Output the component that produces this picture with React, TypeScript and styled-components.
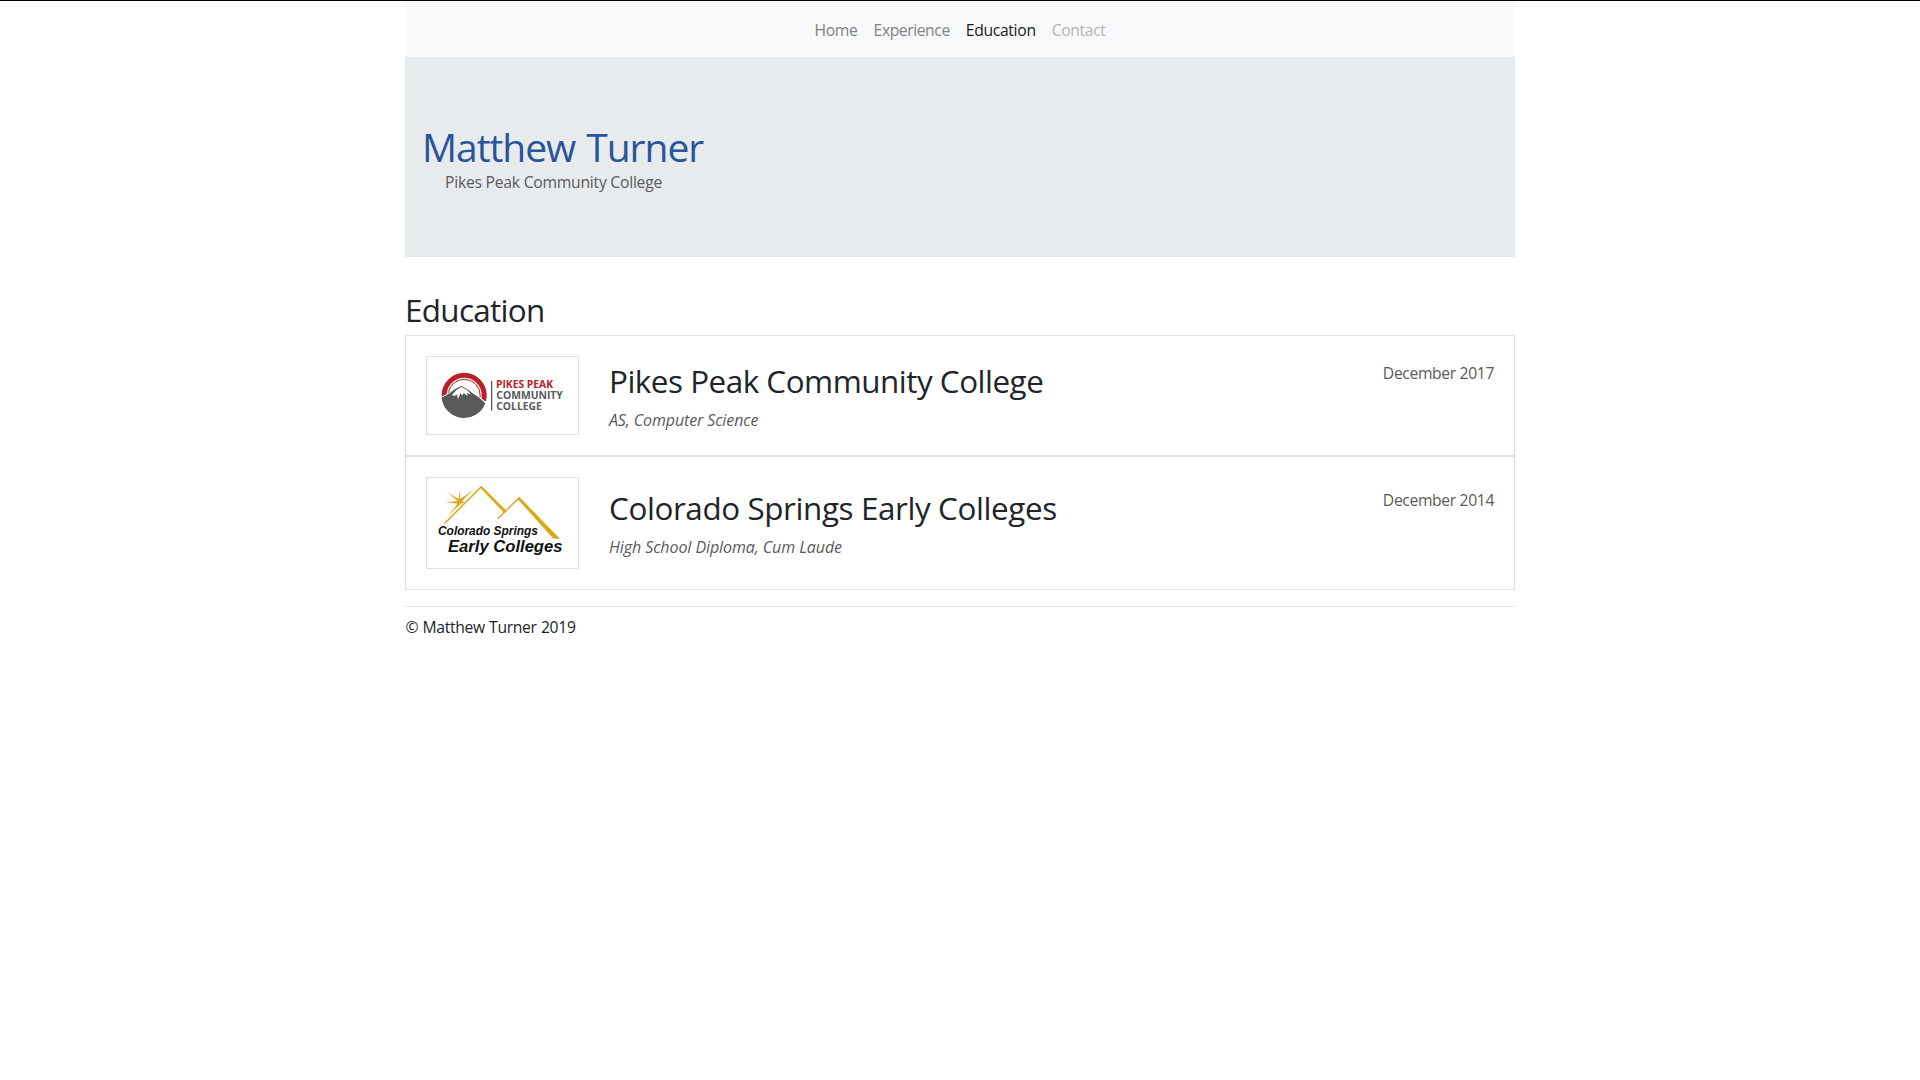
import React from 'react';
import styled, { createGlobalStyle } from 'styled-components';

const GlobalStyle = createGlobalStyle`
  *, *::before, *::after { box-sizing: border-box; }
  body {
    margin: 0;
    border-top: 1px solid #000;
    background: #fff;
    color: #212529;
    font: 400 15.7px/24px "Open Sans", "Noto Sans", sans-serif;
  }
  h1, h2, h3, p { margin: 0; font-weight: 400; }
`;

const Container = styled.div`
  width: 1110px;
  margin: 0 auto;
`;

const Navbar = styled.nav`
  display: flex;
  justify-content: center;
  gap: 16px;
  height: 56px;
  padding: 17px 0 0;
  background: #f8f9fb;
`;

const NavLink = styled.a<{ $color?: string; $spacing: number }>`
  color: ${(p) => p.$color ?? '#808182'};
  letter-spacing: ${(p) => p.$spacing}px;
  text-decoration: none;
`;

const Jumbotron = styled.header`
  height: 200px;
  padding: 66px 17px 0;
  background: #e8ebee;
`;

const Name = styled.h1`
  color: #2a5599;
  font-size: 39px;
  line-height: 48px;
  letter-spacing: -1.05px;
  word-spacing: 2px;
`;

const School = styled.p`
  margin: -1px 0 0 23px;
  color: #5a5a5a;
  letter-spacing: -0.24px;
`;

const SectionTitle = styled.h2`
  margin: 34px 0 6px;
  font-size: 31.4px;
  line-height: 38px;
  letter-spacing: -0.66px;
`;

const Card = styled.article`
  display: flex;
  align-items: center;
  padding: 20px;
  border: 1px solid #dfdfdf;
`;

const Thumbnail = styled.div<{ $height: number }>`
  display: flex;
  width: 153px;
  height: ${(p) => p.$height}px;
  margin-right: 30px;
  border: 1px solid #dee2e6;
`;

const Details = styled.div`
  flex: 1;
  padding-top: 2px;
`;

const CardTitle = styled.h3<{ $spacing: number }>`
  margin-bottom: 8px;
  font-size: 31.4px;
  line-height: 38px;
  letter-spacing: ${(p) => p.$spacing}px;
`;

const Degree = styled.p<{ $spacing: number }>`
  color: #5a5a5a;
  font-size: 16px;
  font-style: italic;
  letter-spacing: ${(p) => p.$spacing}px;
`;

const GraduationDate = styled.time`
  height: 70px;
  color: #5a5a5a;
  letter-spacing: -0.36px;
`;

const Footer = styled.footer`
  margin-top: 16px;
  padding: 8px 0 0 0.5px;
  border-top: 1px solid #e5e5e5;
  letter-spacing: -0.32px;
  word-spacing: 0.5px;
`;

const PikesPeakLogo = () => (
  <svg width="151" height="77" viewBox="0 0 151 77" role="img">
    <circle cx="37.2" cy="38.3" r="20" fill="none" stroke="#b92028" strokeWidth="5" />
    <circle cx="37.2" cy="38.3" r="16" fill="none" stroke="#b92028" strokeWidth="1" />
    <path d="M14 40 L23 35 L29 31 L35 28 L41 31 L48 36 L54 41 L60.5 46 L60 62 L14 62Z" fill="#fff" />
    <path d="M14.6 40.5 C20 38 23 36 26 33.5 L29 31.6 L34.5 29 L40 32 L46 36.5 L52 40.5 L58.3 46.2 A22.6 22.6 0 0 1 14.6 40.5Z" fill="#58595b" />
    <path d="M25 38 L30 32.5 L34.5 30 L40 33 L44 37.5 L40 36 L40.5 39 L37 36 L35 38.5 L33.5 36 L31 42 L30 37.5 L27 39Z" fill="#fff" />
    <rect x="64" y="24" width="1.3" height="29.5" fill="#58595b" />
    <g fontFamily="Open Sans, sans-serif" fontWeight="700" fontSize="10.3" fill="#58595b">
      <text x="69" y="31.2" textLength="57" lengthAdjust="spacingAndGlyphs" fill="#b92028">PIKES PEAK</text>
      <text x="69.3" y="42.3" textLength="66.5" lengthAdjust="spacingAndGlyphs">COMMUNITY</text>
      <text x="69.3" y="53.2" textLength="45.5" lengthAdjust="spacingAndGlyphs">COLLEGE</text>
    </g>
  </svg>
);

const EarlyCollegesLogo = () => (
  <svg width="151" height="90" viewBox="0 0 151 90" role="img">
    <path d="M31 23 L19 13.5 L32 21 L32.2 11 L33.5 21 L48 10 L35 23.5 L38 24.5 L34 25.5 L20 39 L30.5 25.5 L18 24.5Z" fill="#e9bb55" />
    <path d="M31 23 L24 17.5 L32 21 L32.2 15 L33.5 21 L39 17 L35 23.5 L37 24.5 L34 25.5 L28 30 L30.5 25.5 L23 24.5Z" fill="#dfa51c" />
    <path d="M17.5 45.5 L54 9" stroke="#dca818" strokeWidth="1.5" fill="none" />
    <path d="M53 9.5 L54.3 7.8 L79.7 33 L77.5 35.2Z" fill="#dca818" />
    <path d="M70.5 41 L91.3 20.5" stroke="#dca818" strokeWidth="1.4" fill="none" />
    <path d="M90.3 20.8 L92.2 18.8 L133 60.8 L126.5 60.8Z" fill="#dca818" />
    <g fontFamily="Liberation Sans, sans-serif" fontWeight="700" fontStyle="italic" fill="#111">
      <text x="11" y="57.2" fontSize="12.4" textLength="100" lengthAdjust="spacingAndGlyphs">Colorado Springs</text>
      <text x="21" y="74" fontSize="17.2" textLength="114.5" lengthAdjust="spacingAndGlyphs">Early Colleges</text>
    </g>
  </svg>
);

const navItems = [
  { label: 'Home', spacing: -0.3 },
  { label: 'Experience', spacing: -0.43 },
  { label: 'Education', spacing: -0.32, color: '#191919' },
  { label: 'Contact', spacing: -0.36, color: '#b4b5b6' },
];

const schools = [
  {
    name: 'Pikes Peak Community College',
    nameSpacing: -0.48,
    degree: 'AS, Computer Science',
    degreeSpacing: -0.11,
    date: 'December 2017',
    logoHeight: 79,
    Logo: PikesPeakLogo,
  },
  {
    name: 'Colorado Springs Early Colleges',
    nameSpacing: -0.39,
    degree: 'High School Diploma, Cum Laude',
    degreeSpacing: -0.08,
    date: 'December 2014',
    logoHeight: 92,
    Logo: EarlyCollegesLogo,
  },
];

export default function App() {
  return (
    <>
      <GlobalStyle />
      <Container>
        <Navbar>
          {navItems.map((item) => (
            <NavLink key={item.label} $color={item.color} $spacing={item.spacing}>
              {item.label}
            </NavLink>
          ))}
        </Navbar>
        <Jumbotron>
          <Name>Matthew Turner</Name>
          <School>Pikes Peak Community College</School>
        </Jumbotron>
        <main>
          <SectionTitle>Education</SectionTitle>
          {schools.map(({ Logo, ...school }) => (
            <Card key={school.name}>
              <Thumbnail $height={school.logoHeight}>
                <Logo />
              </Thumbnail>
              <Details>
                <CardTitle $spacing={school.nameSpacing}>{school.name}</CardTitle>
                <Degree $spacing={school.degreeSpacing}>{school.degree}</Degree>
              </Details>
              <GraduationDate>{school.date}</GraduationDate>
            </Card>
          ))}
        </main>
        <Footer>© Matthew Turner 2019</Footer>
      </Container>
    </>
  );
}
